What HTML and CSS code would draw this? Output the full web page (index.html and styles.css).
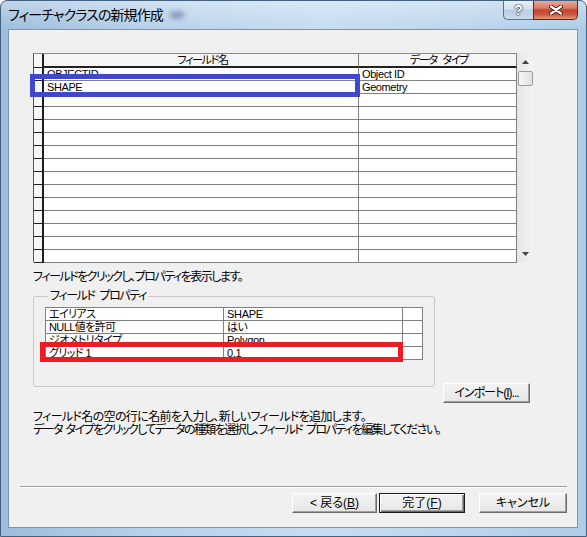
FILE: index.html
```html
<!DOCTYPE html>
<html lang="ja">
<head>
<meta charset="utf-8">
<title>フィーチャクラスの新規作成</title>
<link rel="stylesheet" href="styles.css">
</head>
<body>
<div class="window">
  <div class="titlebar">
    <span class="title">フィーチャクラスの新規作成</span><span class="smudge"></span>
    <div class="caption">
      <div class="cb help">?</div>
      <div class="cb close">
        <svg width="14" height="10" viewBox="0 0 14 10">
          <path d="M2 1.5 L12 8.5 M12 1.5 L2 8.5" stroke="#4a1810" stroke-width="4" stroke-linecap="round"/>
          <path d="M2 1.5 L12 8.5 M12 1.5 L2 8.5" stroke="#fff" stroke-width="2.2" stroke-linecap="round"/>
        </svg>
      </div>
    </div>
  </div>
  <div class="client">
    <div class="main">
      <div class="grid">
        <div class="tbl">
          <div class="row head"><div class="rh"></div><div class="c hc">フィールド名</div><div class="c hc">データ タイプ</div></div>
          <div class="row"><div class="rh"></div><div class="c">OBJECTID</div><div class="c">Object ID</div></div>
          <div class="row"><div class="rh"></div><div class="c">SHAPE</div><div class="c">Geometry</div></div>
          <div class="row"><div class="rh"></div><div class="c"></div><div class="c"></div></div>
          <div class="row"><div class="rh"></div><div class="c"></div><div class="c"></div></div>
          <div class="row"><div class="rh"></div><div class="c"></div><div class="c"></div></div>
          <div class="row"><div class="rh"></div><div class="c"></div><div class="c"></div></div>
          <div class="row"><div class="rh"></div><div class="c"></div><div class="c"></div></div>
          <div class="row"><div class="rh"></div><div class="c"></div><div class="c"></div></div>
          <div class="row"><div class="rh"></div><div class="c"></div><div class="c"></div></div>
          <div class="row"><div class="rh"></div><div class="c"></div><div class="c"></div></div>
          <div class="row"><div class="rh"></div><div class="c"></div><div class="c"></div></div>
          <div class="row"><div class="rh"></div><div class="c"></div><div class="c"></div></div>
          <div class="row"><div class="rh"></div><div class="c"></div><div class="c"></div></div>
          <div class="row"><div class="rh"></div><div class="c"></div><div class="c"></div></div>
          <div class="row"><div class="rh"></div><div class="c"></div><div class="c"></div></div>
        </div>
        <div class="sb">
          <div class="sb-btn"><svg width="7" height="4" viewBox="0 0 7 4"><polygon points="0,4 3.5,0 7,4" fill="#444"/></svg></div>
          <div class="sb-thumb"></div>
          <div class="sb-track"></div>
          <div class="sb-btn"><svg width="7" height="4" viewBox="0 0 7 4"><polygon points="0,0 7,0 3.5,4" fill="#444"/></svg></div>
        </div>
      </div>
      <p class="hint">フィールドをクリックし、プロパティを表示します。</p>
      <div class="props-row">
        <fieldset class="group">
          <legend>フィールド プロパティ</legend>
          <div class="ptbl">
            <div class="prow"><div class="pc">エイリアス</div><div class="pc en">SHAPE</div><div class="pc"></div></div>
            <div class="prow"><div class="pc">NULL値を許可</div><div class="pc">はい</div><div class="pc"></div></div>
            <div class="prow"><div class="pc">ジオメトリタイプ</div><div class="pc en">Polygon</div><div class="pc"></div></div>
            <div class="prow"><div class="pc">グリッド 1</div><div class="pc en">0.1</div><div class="pc"></div></div>
          </div>
        </fieldset>
        <button class="btn import">インポート(<u>I</u>)...</button>
      </div>
      <p class="instr"><span class="l1">フィールド名の空の行に名前を入力し、新しいフィールドを追加します。</span><span class="l2">データ タイプをクリックしてデータの種類を選択し、フィールド プロパティを編集してください。</span></p>
    </div>
    <div class="sep"></div>
    <div class="footer">
      <button class="btn back">&lt; 戻る(<u>B</u>)</button>
      <button class="btn finish">完了(<u>F</u>)</button>
      <button class="btn cancel">キャンセル</button>
    </div>
  </div>
  <div class="mark blue"></div>
  <div class="mark red"></div>
</div>
</body>
</html>
```

FILE: styles.css
```css
* { box-sizing: border-box; }
html, body { margin: 0; padding: 0; }
body {
  width: 587px;
  height: 537px;
  overflow: hidden;
  background: #ffffff;
  font-family: "Liberation Sans", "Noto Sans CJK JP", sans-serif;
  font-size: 12px;
  color: #000;
  font-feature-settings: "palt" 1;
}

.window {
  position: relative;
  width: 587px;
  height: 537px;
  display: flex;
  flex-direction: column;
  border: 1px solid #45617f;
  border-radius: 7px 7px 0 0;
  padding: 0 8px 8px 7px;
  background:
    linear-gradient(180deg, rgba(255,255,255,0.35) 0, rgba(255,255,255,0) 28px),
    linear-gradient(90deg, #9dbddd 0%, #b7d1ea 25%, #c6dcf1 55%, #bcd5ec 80%, #aecbe7 100%);
}

.titlebar {
  flex: none;
  height: 28px;
  display: flex;
  align-items: flex-start;
}
.title {
  font-size: 14px;
  line-height: 18px;
  padding-top: 5px;
  letter-spacing: -0.9px;
  white-space: nowrap;
}
.smudge {
  width: 16px;
  height: 8px;
  margin: 10px 0 0 6px;
  border-radius: 50%;
  background: rgba(80, 90, 140, 0.5);
  filter: blur(2.5px);
}
.caption {
  margin-left: auto;
  display: flex;
}
.cb {
  height: 19px;
  display: flex;
  align-items: center;
  justify-content: center;
  border: 1px solid;
  border-top: none;
}
.help {
  width: 30px;
  border-color: #56708f;
  border-right: none;
  border-radius: 0 0 0 5px;
  background: linear-gradient(#eaf1f9, #d2dfed 45%, #b9cce2 50%, #c9dbee 100%);
  color: #fff;
  font: bold 14px "Liberation Sans", sans-serif;
  text-shadow: 0 0 1px #2a3c55, 0 0 1px #2a3c55, 0 0 2px #2a3c55;
}
.close {
  width: 45px;
  border-color: #5a2a22;
  border-radius: 0 0 5px 0;
  background: linear-gradient(#eaa998, #d77a66 40%, #c5432d 50%, #cf583f 75%, #e49677 100%);
}

.client {
  flex: 1;
  display: flex;
  flex-direction: column;
  background: #f0f0f0;
  border: 1px solid #7a96b6;
}
.main {
  padding: 23px 0 0 24px;
}

.grid {
  display: flex;
  width: 500px;
  height: 209px;
}
.tbl {
  width: 484px;
  border-left: 1px solid #555;
  border-top: 1px solid #8a8a8a;
  background: #fff;
}
.row {
  display: grid;
  grid-template-columns: 10px 315px 158px;
  height: 13px;
}
.row.head { height: 14px; }
.rh {
  background: #f7f7f7;
  border-right: 2px solid #1e1e1e;
  border-bottom: 1px solid #1e1e1e;
}
.c {
  border-right: 1px solid #808080;
  border-bottom: 1px solid #808080;
  font-size: 11px;
  line-height: 12px;
  letter-spacing: -0.4px;
  padding-left: 3px;
  white-space: nowrap;
  overflow: hidden;
}
.head .c {
  background: #f5f5f5;
  border-bottom: 2px solid #222;
  text-align: center;
  font-size: 11px;
  letter-spacing: -1.3px;
  word-spacing: 4px;
}

.sb {
  width: 16px;
  display: flex;
  flex-direction: column;
  background: linear-gradient(90deg, #e6e6e6, #f3f3f3);
}
.sb-btn {
  height: 17px;
  display: flex;
  align-items: center;
  justify-content: center;
}
.sb-thumb {
  height: 15px;
  margin: 1px 0 0 1px;
  border: 1px solid #9c9c9c;
  border-radius: 2px;
  background: linear-gradient(90deg, #f7f7f7, #e0e0e0);
}
.sb-track { flex: 1; }

.hint {
  margin: 8px 0 0;
  line-height: 14px;
  letter-spacing: -1.5px;
}

.props-row {
  display: flex;
  align-items: flex-start;
  margin-top: 5px;
}
.group {
  margin: 0;
  padding: 4px 11px 26px;
  width: 402px;
  min-inline-size: auto;
  border: 1px solid #c8c8c8;
  border-radius: 3px;
}
.group legend {
  padding: 0 2px;
  margin-left: 3px;
  font-size: 12px;
  line-height: 14px;
  letter-spacing: -1.4px;
  word-spacing: 3px;
}
.ptbl {
  width: 378px;
  border-left: 1px solid #808080;
  border-top: 1px solid #808080;
  background: #fff;
}
.prow {
  display: grid;
  grid-template-columns: 178px 179px 20px;
  height: 13px;
}
.pc {
  border-right: 1px solid #808080;
  border-bottom: 1px solid #808080;
  padding-left: 3px;
  font-size: 11px;
  line-height: 12px;
  letter-spacing: -0.6px;
  white-space: nowrap;
  overflow: hidden;
}
.pc.en { letter-spacing: -0.3px; }

.btn {
  font-family: inherit;
  font-size: 12px;
  font-feature-settings: "palt" 1;
  height: 20px;
  padding: 0;
  color: #000;
  line-height: 16px;
  background: linear-gradient(#f3f3f3, #e6e6e6);
  border: 1px solid;
  border-color: #fff #6b6b6b #6b6b6b #fff;
  box-shadow: inset -1px -1px 0 #a0a0a0;
}
.import {
  width: 87px;
  margin: 94px 0 0 8px;
  letter-spacing: -1px;
}

.instr {
  margin: 8px 0 0;
  line-height: 13px;
}
.instr span { display: block; white-space: nowrap; }
.instr .l1 { letter-spacing: -0.65px; }
.instr .l2 { letter-spacing: -1.55px; word-spacing: 2px; }

.sep {
  margin: auto 10px 0 11px;
  border-top: 1px solid #a0a0a0;
  border-bottom: 1px solid #fff;
}
.footer {
  display: flex;
  justify-content: flex-end;
  padding: 5px 10px 14px 0;
}
.back { width: 85px; }
.finish {
  width: 86px;
  margin-left: 2px;
  border-color: #1a1a1a;
  box-shadow: inset 1px 1px 0 #fff, inset -1px -1px 0 #6b6b6b, inset -2px -2px 0 #a0a0a0;
}
.cancel {
  width: 88px;
  margin-left: 14px;
}

.mark {
  position: absolute;
  border: 5px solid;
}
.blue {
  left: 29px;
  top: 73px;
  width: 330px;
  height: 23px;
  border-color: #3f48cc;
}
.red {
  left: 39px;
  top: 341px;
  width: 363px;
  height: 20px;
  border-color: #ed1c24;
}
```
